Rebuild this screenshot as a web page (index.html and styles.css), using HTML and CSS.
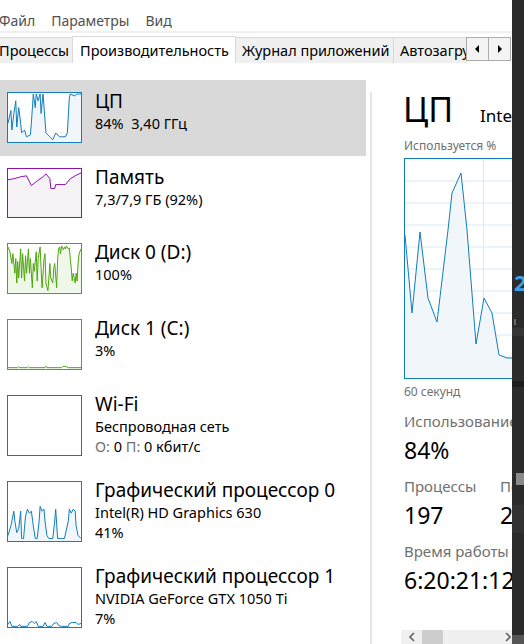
FILE: index.html
```html
<!DOCTYPE html>
<html lang="ru">
<head>
  <meta charset="UTF-8" />
  <title>Диспетчер задач</title>
  <link rel="stylesheet" href="styles.css">
</head>
<body>
  <div class="screen">
    <div class="window">
      <!-- menu -->
      <div class="menubar">
        <span class="menu-item">Файл</span>
        <span class="menu-item">Параметры</span>
        <span class="menu-item">Вид</span>
      </div>
      <div class="menu-line"></div>

      <!-- tabs -->
      <div class="tab-strip">
        <div class="tab-list">
          <div class="tab tab-first">Процессы</div>
          <div class="tab tab-active">Производительность</div>
          <div class="tab tab-log">Журнал приложений</div>
          <div class="tab">Автозагрузка</div>
        </div>
        <div class="tab-scroll">
          <div class="scroll-btn">
            <svg width="5" height="8" viewBox="0 0 5 8"><path d="M4 0 L0 4 L4 8 Z" fill="#000"/></svg>
          </div>
          <div class="scroll-btn">
            <svg width="5" height="8" viewBox="0 0 5 8"><path d="M1 0 L5 4 L1 8 Z" fill="#000"/></svg>
          </div>
        </div>
      </div>

      <div class="perf">
        <!-- left list of resources -->
        <div class="sidebar">
          <div class="res-row selected">
            <div class="thumb thumb-cpu">
              <svg viewBox="0 0 75 50" preserveAspectRatio="none">
                <polygon class="fill-blue" points="0,31 3,18 4,38 6,21 8,8 9,35 11,15 13,31 14,41 17,38 19,45 23,43 24,31 26,1 28,15 29,1 31,8 33,1 34,21 36,1 39,41 43,45 46,48 49,41 53,45 56,45 59,45 61,41 63,5 64,1 68,3 71,1 75,1 75,50 0,50"/>
                <polyline class="line-blue" points="0,31 3,18 4,38 6,21 8,8 9,35 11,15 13,31 14,41 17,38 19,45 23,43 24,31 26,1 28,15 29,1 31,8 33,1 34,21 36,1 39,41 43,45 46,48 49,41 53,45 56,45 59,45 61,41 63,5 64,1 68,3 71,1 75,1"/>
              </svg>
            </div>
            <div class="res-text">
              <div class="res-title">ЦП</div>
              <div class="res-sub">84%&nbsp; 3,40 ГГц</div>
            </div>
          </div>

          <div class="res-row">
            <div class="thumb thumb-mem">
              <svg viewBox="0 0 75 50" preserveAspectRatio="none">
                <polygon class="fill-purple" points="0,11 6,10 13,8 19,7 24,17 29,13 36,8 39,5 43,10 44,20 48,20 49,16 59,16 64,10 69,7 75,4 75,50 0,50"/>
                <polyline class="line-purple" points="0,11 6,10 13,8 19,7 24,17 29,13 36,8 39,5 43,10 44,20 48,20 49,16 59,16 64,10 69,7 75,4"/>
              </svg>
            </div>
            <div class="res-text">
              <div class="res-title">Память</div>
              <div class="res-sub">7,3/7,9 ГБ (92%)</div>
            </div>
          </div>

          <div class="res-row">
            <div class="thumb thumb-disk">
              <svg viewBox="0 0 75 50" preserveAspectRatio="none">
                <polygon class="fill-green" points="0,3 2,8 4,20 5,10 7,30 8,15 9,40 10,18 11,35 13,5 14,35 15,10 17,38 18,12 19,30 21,5 22,30 23,15 25,45 26,20 27,28 29,8 30,38 31,15 33,3 34,25 35,45 36,30 37,15 38,10 39,40 41,48 42,35 43,20 44,35 46,40 47,25 48,20 50,45 51,15 52,5 53,3 54,10 55,2 57,6 58,3 59,5 60,2 62,5 63,4 64,15 65,25 66,38 67,30 69,40 70,30 71,38 72,20 73,10 75,5 75,50 0,50"/>
                <polyline class="line-green" points="0,3 2,8 4,20 5,10 7,30 8,15 9,40 10,18 11,35 13,5 14,35 15,10 17,38 18,12 19,30 21,5 22,30 23,15 25,45 26,20 27,28 29,8 30,38 31,15 33,3 34,25 35,45 36,30 37,15 38,10 39,40 41,48 42,35 43,20 44,35 46,40 47,25 48,20 50,45 51,15 52,5 53,3 54,10 55,2 57,6 58,3 59,5 60,2 62,5 63,4 64,15 65,25 66,38 67,30 69,40 70,30 71,38 72,20 73,10 75,5"/>
              </svg>
            </div>
            <div class="res-text">
              <div class="res-title">Диск 0 (D:)</div>
              <div class="res-sub">100%</div>
            </div>
          </div>

          <div class="res-row">
            <div class="thumb thumb-disk plain">
              <svg viewBox="0 0 75 50" preserveAspectRatio="none">
                <polyline class="line-green" points="0,49 10,49 11,48 12,49 20,49 21,48 22,49 38,49 39,47.5 40,49 55,49 56,48 58,47.5 60,48 62,49 75,49"/>
              </svg>
            </div>
            <div class="res-text">
              <div class="res-title">Диск 1 (C:)</div>
              <div class="res-sub">3%</div>
            </div>
          </div>

          <div class="res-row">
            <div class="thumb thumb-net plain"></div>
            <div class="res-text">
              <div class="res-title">Wi-Fi</div>
              <div class="res-sub">Беспроводная сеть</div>
              <div class="res-sub"><span class="muted">О:</span> 0 <span class="muted">П:</span> 0 кбит/с</div>
            </div>
          </div>

          <div class="res-row">
            <div class="thumb thumb-gpu">
              <svg viewBox="0 0 75 61" preserveAspectRatio="none">
                <polygon class="fill-blue" points="0,55 3,45 6,30 7,40 9,52 11,48 13,30 14,58 16,58 18,35 20,28 22,32 24,30 26,45 28,58 30,58 32,40 33,25 35,30 37,28 38,40 40,55 42,58 46,58 48,40 49,28 51,58 55,58 58,58 62,40 63,28 65,32 67,28 69,30 70,45 72,55 75,58 75,61 0,61"/>
                <polyline class="line-blue" points="0,55 3,45 6,30 7,40 9,52 11,48 13,30 14,58 16,58 18,35 20,28 22,32 24,30 26,45 28,58 30,58 32,40 33,25 35,30 37,28 38,40 40,55 42,58 46,58 48,40 49,28 51,58 55,58 58,58 62,40 63,28 65,32 67,28 69,30 70,45 72,55 75,58"/>
              </svg>
            </div>
            <div class="res-text">
              <div class="res-title">Графический процессор 0</div>
              <div class="res-sub">Intel(R) HD Graphics 630</div>
              <div class="res-sub">41%</div>
            </div>
          </div>

          <div class="res-row">
            <div class="thumb thumb-gpu plain">
              <svg viewBox="0 0 75 61" preserveAspectRatio="none">
                <polyline class="line-blue" points="0,58 2,55 4,60 10,60 12,58 13,60 20,60 22,56 25,55 27,57 29,55 31,60 36,60 38,56 40,60 45,60 47,57 50,56 52,59 55,60 62,60 63,57 66,56 70,56 72,58 75,57"/>
              </svg>
            </div>
            <div class="res-text">
              <div class="res-title">Графический процессор 1</div>
              <div class="res-sub">NVIDIA GeForce GTX 1050 Ti</div>
              <div class="res-sub">7%</div>
            </div>
          </div>
        </div>

        <div class="divider"></div>

        <!-- detail of the selected resource -->
        <div class="detail">
          <div class="detail-head">
            <span class="detail-title">ЦП</span>
            <span class="detail-model">Intel(R) Core(TM) i5-7500 CPU @ 3.40GHz</span>
          </div>
          <div class="caption">Используется %</div>
          <div class="chart">
            <svg width="240" height="219" viewBox="0 0 240 219">
              <g class="grid">
                <line x1="0" y1="22" x2="240" y2="22"/>
                <line x1="0" y1="44" x2="240" y2="44"/>
                <line x1="0" y1="66" x2="240" y2="66"/>
                <line x1="0" y1="88" x2="240" y2="88"/>
                <line x1="0" y1="110" x2="240" y2="110"/>
                <line x1="0" y1="132" x2="240" y2="132"/>
                <line x1="0" y1="154" x2="240" y2="154"/>
                <line x1="0" y1="176" x2="240" y2="176"/>
                <line x1="0" y1="198" x2="240" y2="198"/>
                <line x1="78.5" y1="0" x2="78.5" y2="219"/>
                <line x1="157.5" y1="0" x2="157.5" y2="219"/>
              </g>
              <polygon class="fill-blue" points="0,76 7,154 15,73 23,139 32,163 43,71 47,34 56,14 62,71 71,185 79,139 87,154 94,196 102,199 107,199 115,197 125,199 240,199 240,219 0,219"/>
              <polyline class="line-blue" points="0,76 7,154 15,73 23,139 32,163 43,71 47,34 56,14 62,71 71,185 79,139 87,154 94,196 102,199 107,199 115,197 125,199 240,199"/>
            </svg>
          </div>
          <div class="caption caption-under">60 секунд</div>

          <div class="stat">
            <div class="stat-label">Использование</div>
            <div class="stat-value">84%</div>
          </div>
          <div class="stat-row">
            <div class="stat stat-col">
              <div class="stat-label">Процессы</div>
              <div class="stat-value">197</div>
            </div>
            <div class="stat">
              <div class="stat-label">Потоки</div>
              <div class="stat-value">2592</div>
            </div>
          </div>
          <div class="stat">
            <div class="stat-label">Время работы</div>
            <div class="stat-value">6:20:21:12</div>
          </div>

          <div class="hscroll">
            <span class="hs-arrow">
              <svg width="8" height="10" viewBox="0 0 8 10"><path d="M6 1 L2 5 L6 9" fill="none" stroke="#606060" stroke-width="1.6"/></svg>
            </span>
            <span class="hs-thumb"></span>
            <span class="hs-track"></span>
            <span class="hs-arrow">
              <svg width="8" height="10" viewBox="0 0 8 10"><path d="M2 1 L6 5 L2 9" fill="none" stroke="#606060" stroke-width="1.6"/></svg>
            </span>
          </div>
        </div>
      </div>
    </div>

    <!-- edge of the window behind -->
    <div class="backdrop">
      <div class="bd-digit">2</div>
      <div class="bd-tick"></div>
      <div class="bd-band"></div>
      <div class="bd-dark"></div>
      <div class="bd-box"></div>
      <div class="bd-mid"></div>
      <div class="bd-grey"></div>
    </div>
  </div>
</body>
</html>
```

FILE: styles.css
```css
body {
  margin: 0;
  font-family: 'Noto Sans', 'Open Sans', sans-serif;
  color: #000;
  background: #fff;
  overflow: hidden;
}
.screen {
  display: flex;
  width: 524px;
  height: 644px;
  overflow: hidden;
}
.window {
  width: 512px;
  flex: none;
  display: flex;
  flex-direction: column;
  overflow: hidden;
  background: #fff;
}

/* menu */
.menubar {
  height: 31px;
  box-sizing: border-box;
  padding-top: 11px;
  display: flex;
  gap: 16px;
  margin-left: -1px;
  font-size: 14px;
  line-height: 20px;
  color: #505050;
}
.menu-line {
  height: 2px;
  background: #f0f0f0;
}

/* tabs */
.tab-strip {
  height: 30px;
  display: flex;
  align-items: flex-end;
}
.tab-list {
  flex: 1;
  display: flex;
  align-items: flex-end;
  overflow: hidden;
  height: 30px;
}
.tab {
  flex: none;
  height: 26px;
  box-sizing: border-box;
  padding: 2px 6px 0;
  border: 1px solid #d9d9d9;
  border-bottom: none;
  margin-left: -1px;
  background: #f0f0f0;
  font-size: 14.5px;
  line-height: 20px;
  white-space: nowrap;
}
.tab-first {
  width: 76px;
  margin-left: -3px;
  padding-left: 1px;
}
.tab-active {
  width: 164px;
  height: 27px;
  background: #fff;
  padding-top: 3px;
  padding-left: 7px;
}
.tab-log {
  width: 159px;
}
.tab-scroll {
  display: flex;
  margin-bottom: 2px;
  margin-right: 1px;
}
.scroll-btn {
  width: 23px;
  height: 24px;
  box-sizing: border-box;
  border: 1px solid #adadad;
  margin-left: -1px;
  background: #f4f4f4;
  display: flex;
  align-items: center;
  justify-content: center;
}

/* performance page */
.perf {
  flex: 1;
  display: flex;
  min-height: 0;
}
.sidebar {
  width: 366px;
  flex: none;
  padding-top: 17px;
}
.res-row {
  display: flex;
  gap: 13px;
  padding: 12px 0 13px 7px;
}
.res-row.selected {
  background: #d9d9d9;
}
.thumb {
  width: 75px;
  min-height: 50px;
  flex: none;
  box-sizing: border-box;
  border: 1px solid;
  background: #fff;
}
.thumb svg {
  display: block;
  width: 100%;
  height: 100%;
}
.thumb-cpu, .thumb-gpu { border-color: #117dbb; }
.thumb-mem { border-color: #8b12ae; }
.thumb-disk { border-color: #4da60c; }
.thumb-net { border-color: #a74f01; }

.fill-blue { fill: #f1f6fa; }
.fill-purple { fill: #f4f2f4; }
.fill-green { fill: #eff7e9; }
.line-blue, .line-purple, .line-green {
  fill: none;
  stroke-width: 1;
  vector-effect: non-scaling-stroke;
  stroke-linejoin: round;
}
.line-blue { stroke: #117dbb; }
.line-purple { stroke: #8b12ae; }
.line-green { stroke: #4da60c; }

.res-text {
  white-space: nowrap;
}
.res-title {
  font-size: 19px;
  line-height: 18px;
  margin-bottom: 3px;
}
.res-sub {
  font-size: 14.5px;
  line-height: 20px;
}
.muted {
  color: #707070;
}

.divider {
  width: 2px;
  flex: none;
  margin: 29px 0 0 4px;
  background: #e6e6e6;
}

/* detail panel */
.detail {
  flex: 1;
  min-width: 0;
  overflow: hidden;
  padding-left: 32px;
  display: flex;
  flex-direction: column;
}
.detail-head {
  display: flex;
  align-items: baseline;
  gap: 27px;
  padding-top: 26px;
  white-space: nowrap;
}
.detail-title {
  font-size: 34px;
  line-height: 40px;
  margin-left: -1px;
}
.detail-model {
  font-size: 17px;
}
.caption {
  font-size: 12px;
  line-height: 16px;
  color: #707070;
  margin-top: 9px;
}
.caption-under {
  margin-top: 5px;
}
.chart {
  margin-top: 4px;
  height: 221px;
  width: 240px;
  flex: none;
  box-sizing: border-box;
  border: 1px solid #117dbb;
}
.chart svg {
  display: block;
}
.grid line {
  stroke: #d9eaf4;
  stroke-width: 1;
}

.stat {
  margin-top: 11px;
  white-space: nowrap;
}
.stat-row {
  display: flex;
}
.stat-col {
  width: 96px;
  flex: none;
}
.stat-label {
  font-size: 15px;
  line-height: 20px;
  color: #707070;
}
.stat-value {
  font-size: 23px;
  line-height: 30px;
  margin-top: 4px;
}

.hscroll {
  margin-top: auto;
  margin-left: -3px;
  height: 14px;
  width: 240px;
  flex: none;
  display: flex;
  background: #f0f0f0;
}
.hs-arrow {
  width: 21px;
  display: flex;
  align-items: center;
  justify-content: center;
}
.hs-thumb {
  width: 21px;
  background: #cdcdcd;
}
.hs-track {
  width: 54px;
}

/* window behind, at the right edge */
.backdrop {
  flex: 1;
  background: #2b2b2b;
}
.bd-digit {
  margin-top: 268px;
  padding-left: 2px;
  color: #3b9fe6;
  font-size: 22px;
  font-weight: bold;
  line-height: 28px;
}
.bd-tick {
  margin-top: 23px;
  height: 6px;
  margin-left: 2px;
  width: 2px;
  background: #6a6a6a;
}
.bd-band {
  margin-top: 3px;
  height: 8px;
  background: #363636;
}
.bd-dark {
  margin-top: 45px;
  height: 6px;
  background: #1e1e1e;
}
.bd-box {
  margin-top: 86px;
  margin-left: 4px;
  height: 12px;
  background: #8a8a8a;
}
.bd-mid {
  margin-top: 20px;
  height: 28px;
  background: #323232;
}
.bd-grey {
  margin-top: 102px;
  height: 24px;
  background: #555;
}
```
